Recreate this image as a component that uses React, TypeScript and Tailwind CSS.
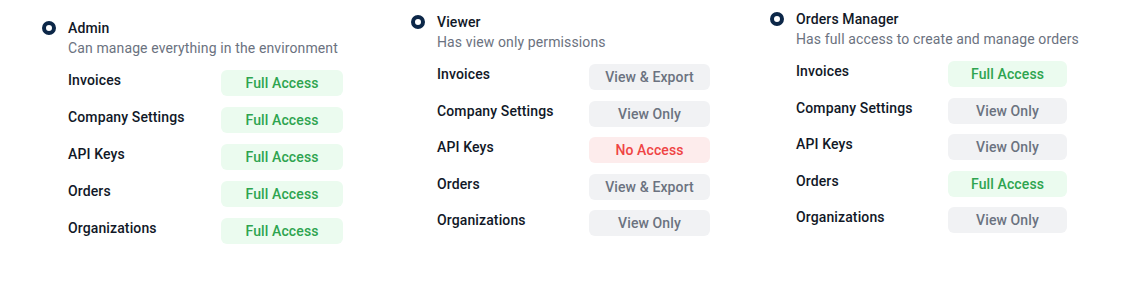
import React from "react";

type Access = "full" | "view" | "export" | "none";

const pillStyles: Record<Access, { cls: string; text: string }> = {
  full: { cls: "bg-[#ebfbef] text-[#2ea44f]", text: "Full Access" },
  view: { cls: "bg-[#f1f2f4] text-[#6b7280]", text: "View Only" },
  export: { cls: "bg-[#f1f2f4] text-[#6b7280]", text: "View & Export" },
  none: { cls: "bg-[#fdecec] text-[#ef4444]", text: "No Access" },
};

const labels = ["Invoices", "Company Settings", "API Keys", "Orders", "Organizations"];

function Role({
  title,
  desc,
  access,
  colCls,
  labelCls,
  pillCls,
  gapCls,
}: {
  title: string;
  desc: string;
  access: Access[];
  colCls: string;
  labelCls: string;
  pillCls: string;
  gapCls: string;
}) {
  return (
    <div className={"flex items-start gap-3 " + colCls}>
      <div className="mt-[3px] h-[14px] w-[14px] shrink-0 rounded-full border-[4px] border-[#0c2748] bg-white" />
      <div className="flex flex-col">
        <div className="text-sm font-medium leading-5 text-[#111827]">{title}</div>
        <div className="text-sm leading-5 text-[#6b7280]">{desc}</div>
        <div className={"mt-3 flex flex-col " + gapCls}>
          {labels.map((l, i) => {
            const p = pillStyles[access[i]];
            return (
              <div key={l} className="flex items-start">
                <div className={"text-sm font-medium leading-5 text-[#111827] " + labelCls}>{l}</div>
                <div
                  className={
                    "flex h-[26px] items-center justify-center rounded-md text-sm font-medium " +
                    pillCls +
                    " " +
                    p.cls
                  }
                >
                  {p.text}
                </div>
              </div>
            );
          })}
        </div>
      </div>
    </div>
  );
}

export default function App() {
  return (
    <div className="flex h-[283px] w-[1148px] bg-white pl-[42px] font-['Roboto',sans-serif] tracking-[0.12px]">
      <Role
        title="Admin"
        desc="Can manage everything in the environment"
        access={["full", "full", "full", "full", "full"]}
        colCls="w-[369px] pt-[18px]"
        labelCls="w-[153px]"
        pillCls="w-[122px]"
        gapCls="gap-[10.9px]"
      />
      <Role
        title="Viewer"
        desc="Has view only permissions"
        access={["export", "view", "none", "export", "view"]}
        colCls="w-[359px] pt-[12px]"
        labelCls="w-[152px]"
        pillCls="w-[121px]"
        gapCls="gap-[10.5px]"
      />
      <Role
        title="Orders Manager"
        desc="Has full access to create and manage orders"
        access={["full", "view", "view", "full", "view"]}
        colCls="pt-[9px]"
        labelCls="w-[152px]"
        pillCls="w-[119px]"
        gapCls="gap-[10.5px]"
      />
    </div>
  );
}
